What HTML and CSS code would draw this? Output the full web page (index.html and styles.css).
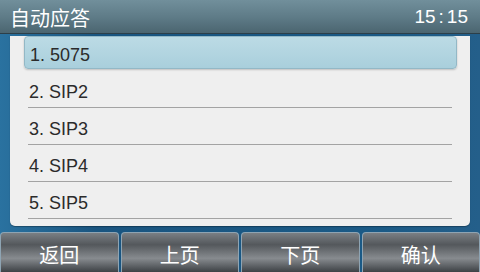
FILE: index.html
```html
<!DOCTYPE html>
<html lang="zh-CN">
<head>
    <meta charset="UTF-8">
    <title>自动应答</title>
    <link rel="stylesheet" href="styles.css">
</head>
<body>
    <div class="screen">
        <div class="titlebar">
            <span class="title">自动应答</span>
            <span class="clock">15<span class="colon">:</span>15</span>
        </div>
        <div class="content">
            <div class="panel">
                <div class="row selected"><span>1. 5075</span></div>
                <div class="row"><span>2. SIP2</span></div>
                <div class="row"><span>3. SIP3</span></div>
                <div class="row"><span>4. SIP4</span></div>
                <div class="row"><span>5. SIP5</span></div>
            </div>
        </div>
        <div class="softkeys">
            <div class="key">返回</div>
            <div class="key">上页</div>
            <div class="key">下页</div>
            <div class="key">确认</div>
        </div>
    </div>
</body>
</html>
```

FILE: styles.css
```css
body {
    margin: 0;
    padding: 0;
    font-family: "Liberation Sans", "Noto Sans CJK SC", sans-serif;
    background-color: #1d5b86;
}
.screen {
    width: 480px;
    height: 272px;
    display: flex;
    flex-direction: column;
    overflow: hidden;
    background: linear-gradient(90deg, #2a72a0, #1a5580 20%, #1b5a86 80%, #245f8a);
}
.titlebar {
    height: 33px;
    display: flex;
    align-items: center;
    justify-content: space-between;
    padding: 0 12px 0 10px;
    background: linear-gradient(#718f9b, #5f7c88 50%, #4b6570);
    border-bottom: 1px solid #2c3f49;
    color: #fff;
}
.title {
    font-family: "Noto Sans CJK SC", sans-serif;
    font-size: 20px;
    margin-top: 1px;
}
.clock {
    font-size: 19px;
    margin-top: 1px;
}
.colon {
    padding: 0 3px;
}
.content {
    height: 198px;
    padding: 0 10px;
}
.panel {
    height: 190px;
    background-color: #efefef;
    border-radius: 0 0 5px 5px;
    box-shadow: 0 1px 1px rgba(0, 0, 0, 0.3);
}
.row {
    height: 37px;
    margin: 0 18px;
    display: flex;
    align-items: center;
    padding: 7px 0 0 1px;
    box-sizing: border-box;
    border-bottom: 1px solid #a3a3a3;
    font-size: 18px;
    color: #2b2b2b;
}
.row.selected {
    margin: 2px 13px 2px 14px;
    height: 33px;
    padding: 5px 0 0 5px;
    border: 1px solid #93b8c6;
    border-radius: 4px;
    background: linear-gradient(#bcdbe5, #a9cfdc);
    box-shadow: 0 1px 2px rgba(0, 0, 0, 0.2);
}
.softkeys {
    height: 40px;
    display: flex;
    gap: 2px;
}
.key {
    flex: 1;
    display: flex;
    align-items: center;
    justify-content: center;
    border: 1px solid #8ea4b3;
    border-bottom: none;
    border-radius: 4px 4px 0 0;
    background: linear-gradient(#7a7f84, #54585c 30%, #878b8f 65%, #3d4145);
    color: #fff;
    font-family: "Noto Sans CJK SC", sans-serif;
    font-size: 20px;
    padding-top: 3px;
}
```
